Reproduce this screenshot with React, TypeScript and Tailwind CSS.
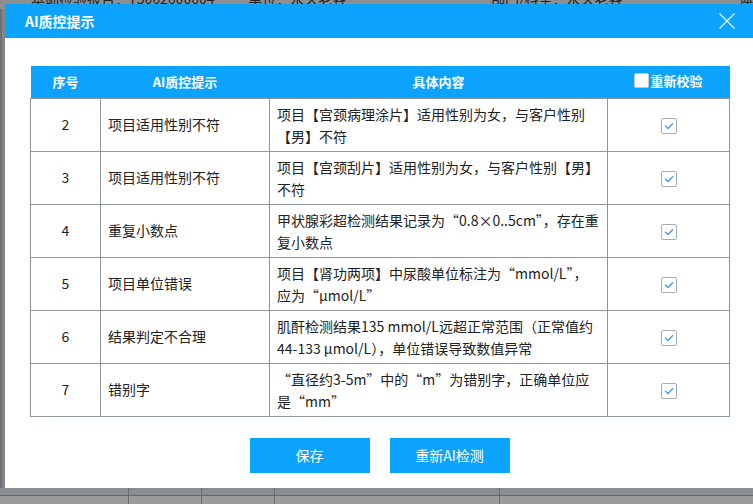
interface Row {
  no: number;
  tip: string;
  lines: string[];
}

const rows: Row[] = [
  { no: 2, tip: '项目适用性别不符', lines: ['项目【宫颈病理涂片】适用性别为女，与客户性别', '【男】不符'] },
  { no: 3, tip: '项目适用性别不符', lines: ['项目【宫颈刮片】适用性别为女，与客户性别【男】', '不符'] },
  { no: 4, tip: '重复小数点', lines: ['甲状腺彩超检测结果记录为“0.8×0..5cm”，存在重', '复小数点'] },
  { no: 5, tip: '项目单位错误', lines: ['项目【肾功两项】中尿酸单位标注为“mmol/L”，', '应为“μmol/L”'] },
  { no: 6, tip: '结果判定不合理', lines: ['肌酐检测结果135 mmol/L远超正常范围（正常值约', '44-133 μmol/L），单位错误导致数值异常'] },
  { no: 7, tip: '错别字', lines: ['“直径约3-5m”中的“m”为错别字，正确单位应', '是“mm”'] },
];

function CheckedBox() {
  return (
    <span className="inline-flex h-[16px] w-[16px] items-center justify-center rounded-[2px] border border-[#a9adb1] bg-white">
      <svg width="10" height="8" viewBox="0 0 10 8" fill="none">
        <path d="M1 3.8 L4 6.5 L9 1.3" stroke="#3d9be9" strokeWidth="1.3" />
      </svg>
    </span>
  );
}

export default function App() {
  return (
    <div
      className="relative h-[504px] w-[753px] overflow-hidden bg-[#8d9093]"
      style={{ fontFamily: '"Noto Sans CJK SC", "Liberation Sans", sans-serif' }}
    >
      {/* page behind the overlay */}
      <div className="flex h-full flex-col">
        <div className="flex h-[22px] -mt-[13px] items-end bg-[#8e8f90] text-[14px] text-[#222]">
          <span className="ml-[31px] w-[219px] whitespace-nowrap">基础检验报告：75062600004</span>
          <span className="w-[245px] whitespace-nowrap">单位：永久老客</span>
          <span className="w-[250px] whitespace-nowrap">部门/科室：永久老客</span>
          <span className="whitespace-nowrap">体</span>
        </div>
        <div className="flex flex-1 border-l-[2px] border-[#6e7276]">
          <div className="w-[3px] bg-[#84888b]" />
        </div>
        <div className="flex h-[8px] border-b border-[#666a6d] bg-[#8b8f92]">
          <div className="w-[129px] border-r border-[#6a6e71]" />
          <div className="w-[73px] border-r border-[#6a6e71]" />
          <div className="w-[73px] border-r border-[#6a6e71]" />
          <div className="w-[225px] border-r border-[#6a6e71]" />
        </div>
        <div className="flex h-[8px] bg-[#9a9a9a]">
          <div className="w-[129px] border-r border-[#6a6e71]" />
          <div className="w-[73px] border-r border-[#6a6e71]" />
          <div className="w-[73px] border-r border-[#6a6e71]" />
          <div className="w-[225px] border-r border-[#6a6e71]" />
        </div>
      </div>

      {/* dialog */}
      <div className="absolute left-[5px] top-[4px] flex h-[484px] w-[749px] flex-col bg-white">
        <div className="flex h-[34px] items-center justify-between bg-[#0ba3fd] pl-[20px] pr-[19px]">
          <span className="text-[14px] font-bold text-white">AI质控提示</span>
          <svg width="16" height="16" viewBox="0 0 16 16" fill="none">
            <path d="M0.5 0.5 L15.5 15.5 M15.5 0.5 L0.5 15.5" stroke="#d9efff" strokeWidth="1.4" />
          </svg>
        </div>

        <div className="px-[25px] pt-[28px]">
          <table className="w-[699px] table-fixed border-collapse text-[14px] text-[#222]">
            <colgroup>
              <col className="w-[70px]" />
              <col className="w-[169px]" />
              <col className="w-[338px]" />
              <col className="w-[122px]" />
            </colgroup>
            <thead>
              <tr className="h-[32px] bg-[#0ba3fd] text-[13px] font-bold text-white">
                <th className="font-bold">序号</th>
                <th className="font-bold">AI质控提示</th>
                <th className="font-bold">具体内容</th>
                <th className="font-bold">
                  <span className="inline-flex items-center">
                    <span className="mr-[1px] inline-block h-[15px] w-[15px] rounded-[2px] border border-[#c8c8c8] bg-white" />
                    重新校验
                  </span>
                </th>
              </tr>
            </thead>
            <tbody>
              {rows.map((r) => (
                <tr key={r.no} className="h-[53px]">
                  <td className="border border-[#8e979e] text-center">{r.no}</td>
                  <td className="border border-[#8e979e] pl-[7px]">{r.tip}</td>
                  <td className="border border-[#8e979e] pl-[7px] leading-[22px]">
                    {r.lines.map((l, i) => (
                      <div key={i} className="whitespace-nowrap">
                        {l}
                      </div>
                    ))}
                  </td>
                  <td className="border border-[#8e979e] text-center">
                    <span className="inline-flex pt-[2px]">
                      <CheckedBox />
                    </span>
                  </td>
                </tr>
              ))}
            </tbody>
          </table>
        </div>

        <div className="mt-[21px] flex justify-center gap-[20px]">
          <button className="h-[35px] w-[120px] bg-[#0ba3fd] text-[14px] text-white">保存</button>
          <button className="h-[35px] w-[120px] bg-[#0ba3fd] text-[14px] text-white">重新AI检测</button>
        </div>
      </div>
    </div>
  );
}
